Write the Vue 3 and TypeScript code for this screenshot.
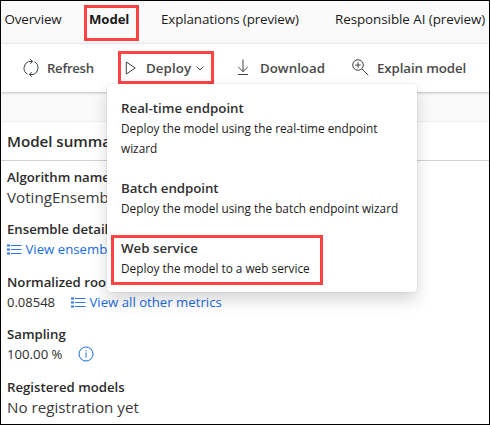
<script setup lang="ts">
interface Tab { label: string; key: string; active?: boolean }
interface Endpoint { title: string; text: string; key: string; marked?: boolean }

const tabs: Tab[] = [
  { label: 'Overview', key: 'overview' },
  { label: 'Model', key: 'model', active: true },
  { label: 'Explanations (preview)', key: 'explanations' },
  { label: 'Responsible AI (preview)', key: 'responsible' },
]

const endpoints: Endpoint[] = [
  { title: 'Real-time endpoint', text: 'Deploy the model using the real-time endpoint wizard', key: 'realtime' },
  { title: 'Batch endpoint', text: 'Deploy the model using the batch endpoint wizard', key: 'batch' },
  { title: 'Web service', text: 'Deploy the model to a web service', key: 'web', marked: true },
]
</script>

<template>
  <div class="page">
    <nav class="tabs">
      <a v-for="t in tabs" :key="t.key" class="tab" :class="[t.key, { active: t.active }]">{{ t.label }}</a>
    </nav>

    <div class="toolbar">
      <button class="tool refresh">
        <svg width="18" height="18" viewBox="0 0 18 18">
          <path d="M5.6 15.2A7 7 0 0 1 6.600 2.500L10.600 2.500M8.200 .3l2.500 2.200-2.500 2.200M12.400 2.800a7 7 0 0 1-1 12.700L7.400 15.500M9.800 13.300l-2.500 2.200 2.500 2.200" />
        </svg>
        <span>Refresh</span>
      </button>
      <div class="deploy-wrap">
        <button class="tool deploy">
          <svg width="12" height="14" viewBox="0 0 12 14"><path d="M1.300 1v12L10.200 7z" /></svg>
          <span>Deploy</span>
          <svg class="chevron" width="8" height="5" viewBox="0 0 8 5"><path d="M.5 .5 4 4 7.500 .5" /></svg>
        </button>
        <div class="menu">
          <div v-for="e in endpoints" :key="e.key" class="option" :class="[e.key, { marked: e.marked }]">
            <div class="option-title">{{ e.title }}</div>
            <div class="option-text">{{ e.text }}</div>
          </div>
        </div>
      </div>
      <button class="tool download">
        <svg width="12" height="17" viewBox="0 0 12 17"><path d="M6 .5v12M1.300 8 6 12.600 10.700 8M1 15.500h10" /></svg>
        <span>Download</span>
      </button>
      <button class="tool explain">
        <svg width="17" height="17" viewBox="0 0 17 17">
          <circle cx="6" cy="6" r="5.3" /><path d="M9.800 9.800 16.300 16.300M3.300 6h5.400M6 3.300v5.400" />
        </svg>
        <span>Explain model</span>
      </button>
    </div>

    <section class="card">
      <h2>Model summa</h2>
      <dl>
        <div class="field">
          <dt>Algorithm name</dt>
          <dd class="large">VotingEnsemb</dd>
        </div>
        <div class="field">
          <dt>Ensemble detail</dt>
          <dd>
            <a class="link">
              <svg width="15" height="11" viewBox="0 0 15 11"><path class="dots" d="M0 1.5h3M0 5.5h3M0 9.5h3" /><path d="M4 1.5h10.500M4 5.5h10.500M4 9.500h10.500" /></svg>
              <span>View ensemb</span>
            </a>
          </dd>
        </div>
        <div class="field">
          <dt>Normalized roo</dt>
          <dd>
            <span class="metric">0.08548</span>
            <a class="link">
              <svg width="15" height="11" viewBox="0 0 15 11"><path class="dots" d="M0 1.5h3M0 5.5h3M0 9.5h3" /><path d="M4 1.5h10.500M4 5.5h10.500M4 9.500h10.500" /></svg>
              <span>View all other metrics</span>
            </a>
          </dd>
        </div>
        <div class="field">
          <dt>Sampling</dt>
          <dd>
            <span class="percent">100.00 %</span>
            <svg class="info" width="16" height="16" viewBox="0 0 16 16"><circle cx="8" cy="8" r="7" /><path d="M8 6.500v5M8 4.200v1.200" /></svg>
          </dd>
        </div>
        <div class="field">
          <dt>Registered models</dt>
          <dd class="large">No registration yet</dd>
        </div>
      </dl>
    </section>
  </div>
</template>

<style>
body { margin: 0; }
</style>

<style scoped>
* { box-sizing: border-box; }
.page {
  width: 490px; height: 425px; overflow: hidden;
  display: flex; flex-direction: column;
  border: 1px solid #000; background: #fafafa; color: #2b2b2b;
  font-family: "Open Sans", "Noto Sans", sans-serif;
}
svg { display: block; flex: none; fill: none; stroke: #424242; stroke-width: 1; }
.tabs { display: flex; flex: none; height: 43px; padding: 4px 0 2px 3px; }
.tab { height: 36px; border: 3px solid transparent; font-size: 13.4px; line-height: 23px; white-space: nowrap; color: #1b1b1b; }
.overview { width: 79.5px; margin-left: -2.5px; letter-spacing: -.12px; }
.model { width: 55px; padding-left: 2px; margin-left: 3px; font-size: 13.2px; letter-spacing: -.1px; }
.tab.active { border-color: #ff4343; font-weight: 700; }
.explanations { width: 174px; margin-left: 19px; letter-spacing: -.12px; }
.responsible { letter-spacing: -.06px; }
.toolbar {
  position: relative; z-index: 1; flex: none; display: flex; height: 48px; padding: 7px 0 0 21px;
  background: #fff; box-shadow: 0 0 2px rgba(0,0,0,.14), 0 1px 3px rgba(0,0,0,.2);
}
.tool {
  display: flex; align-items: center; height: 33px; padding: 0; border: 0; background: none;
  font: 600 13.3px/20px "Open Sans", "Noto Sans", sans-serif; color: #4a4a4a; white-space: nowrap;
}
.refresh { width: 96px; gap: 7px; font-size: 13.2px; letter-spacing: -.3px; }
.deploy-wrap { position: relative; width: 96px; }
.deploy { width: 96px; border: 3px solid #ff4343; padding-left: 4px; letter-spacing: .1px; }
.deploy span { margin-left: 9px; }
.chevron { margin: 2px 0 0 5px; }
.download { width: 114px; margin-left: 23px; gap: 11px; }
.explain { margin-left: 1px; gap: 8px; letter-spacing: -.1px; }
.menu {
  position: absolute; left: -11px; top: 33px; width: 310px; height: 208px; padding: 14px;
  background: #fff; border-radius: 4px;
  box-shadow: 0 0 2px rgba(0,0,0,.14), 0 8px 16px rgba(0,0,0,.16);
}
.option { position: relative; margin-bottom: 20px; line-height: 20px; }
.option-title { font-size: 13.3px; font-weight: 600; color: #303030; }
.option-text { font-size: 11.8px; color: #1b1b1b; }
.batch .option-title { letter-spacing: -.07px; }
.marked::after {
  content: ""; box-sizing: border-box; position: absolute; left: -10px; top: -3px;
  width: 212px; height: 50px; border: 3px solid #ff4343;
}
.card { flex: 1; margin-top: 30px; background: #fff; box-shadow: 0 0 2px rgba(0,0,0,.14); }
h2 { height: 39px; margin: 0; padding-left: 6px; border-bottom: 1px solid #d1d1d1; font-size: 15.200px; font-weight: 600; line-height: 39px; letter-spacing: -.05px; }
dl { margin: 0; padding: 5.600px 0 0 6px; }
.field { height: 52.5px; white-space: nowrap; }
dt { font-size: 13.2px; font-weight: 600; line-height: 20px; }
dd { display: flex; align-items: center; height: 20.5px; margin: 0; font-size: 13.2px; line-height: 20px; }
.large { font-size: 15.2px; color: #3a3a3a; }
.metric { width: 64px; font-size: 13px; }
.percent { width: 71px; }
.link { display: flex; align-items: center; gap: 3.500px; color: #1a6be0; }
.link svg { stroke: #2f76e8; margin-top: 1px; }
.link .dots { stroke-width: 2; }
.info { stroke: #1a6be0; }
</style>
